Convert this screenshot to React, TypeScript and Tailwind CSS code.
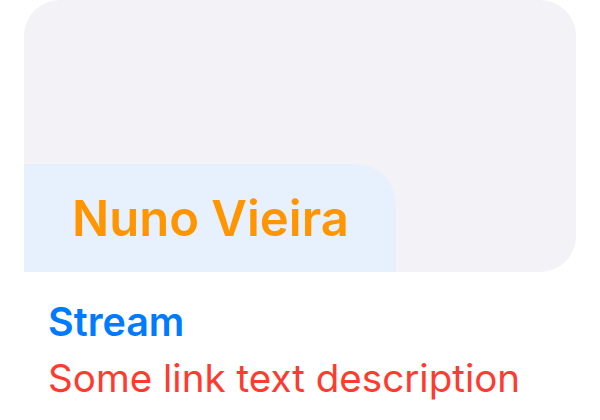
export default function App() {
  return (
    <div className="min-h-[420px] w-[600px] bg-white px-6" style={{ fontFamily: 'Inter, "Noto Sans", sans-serif' }}>
      {/* Card */}
      <div className="flex h-[272px] flex-col justify-end rounded-[36px] rounded-bl-none bg-[#f2f2f7]">
        <div className="h-[108px] w-[372px] rounded-tr-[40px] bg-[#e7f1fd] pl-[48px] pt-[30px]">
          <p className="text-[49px] font-semibold leading-[50px] text-[#ff9500]">Nuno Vieira</p>
        </div>
      </div>

      {/* Texts */}
      <div className="px-6 pt-[27px]">
        <p className="text-[39.5px] font-semibold leading-[46px] text-[#007aff]">Stream</p>
        <p className="mt-[10px] text-[38.6px] leading-[46px] text-[#ff3b30]">Some link text description</p>
      </div>
    </div>
  );
}
